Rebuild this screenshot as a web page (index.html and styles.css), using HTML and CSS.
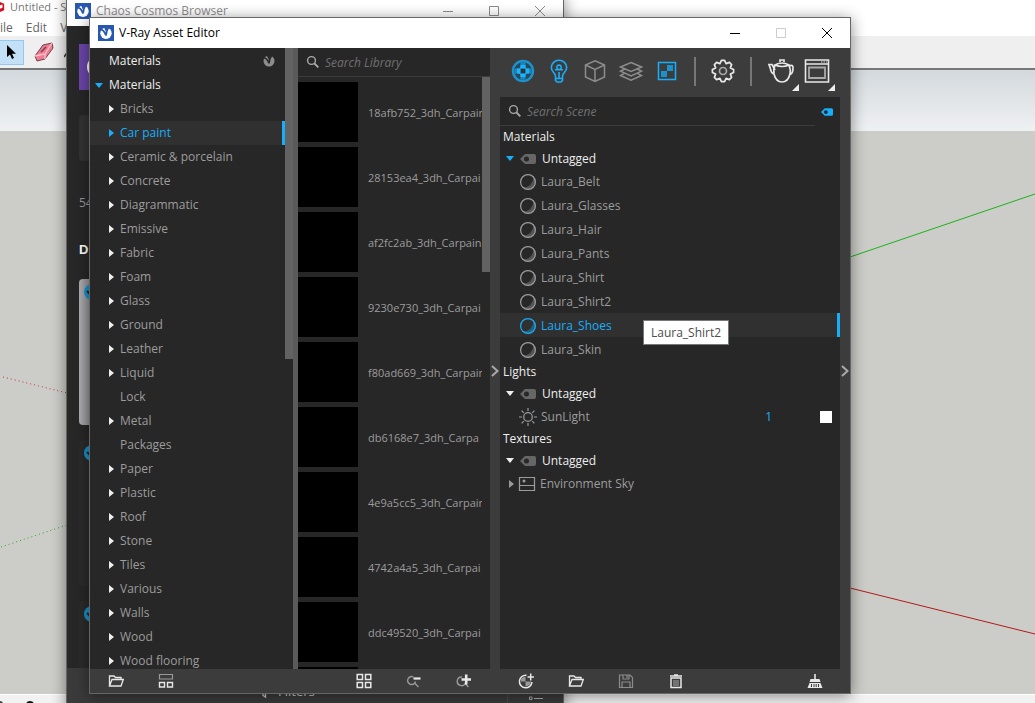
FILE: index.html
```
<!DOCTYPE html>
<html lang="en">
<head>
<meta charset="utf-8">
<title>V-Ray Asset Editor</title>
<link rel="stylesheet" href="styles.css">
</head>
<body>
<svg class="defs" aria-hidden="true">
  <symbol id="vray" viewBox="0 0 16 16"><rect width="16" height="16" fill="#2757ae"/><circle cx="8" cy="8.200" r="5.700" fill="#fff"/><path d="M2 4.800Q5.500 4 8 10.500Q8.500 5 11 1.500" fill="none" stroke="#2757ae" stroke-width="1.800"/><path d="M5.500 1H10L8 7Z" fill="#2757ae"/></symbol>
  <symbol id="search" viewBox="0 0 14 14"><circle cx="5.500" cy="5.500" r="3.900" fill="none" stroke="currentColor" stroke-width="1.400"/><path d="M8.500 8.500 12.300 12.300" stroke="currentColor" stroke-width="1.800"/></symbol>
  <symbol id="tag" viewBox="0 0 16 12"><path fill-rule="evenodd" fill="currentColor" d="M0 6 5 1H14Q16 1 16 3V9Q16 11 14 11H5ZM6.500 3.500A2.500 2.500 0 1 0 6.500 8.500A2.500 2.500 0 1 0 6.500 3.500Z"/></symbol>
  <symbol id="ball" viewBox="0 0 18 18"><path d="M14.500 3.800A7.200 7.200 0 0 1 4 14.500Q14 14 14.500 3.800Z" fill="currentColor" opacity=".4"/><circle cx="9" cy="9" r="7.400" fill="none" stroke="currentColor" stroke-width="1.200"/></symbol>
  <symbol id="folder" viewBox="0 0 16 16"><path d="M1.500 13V3H6L7.500 4.500H13V6.500M1.500 13 4 6.500H15.300L13 13Z" fill="none" stroke="currentColor" stroke-width="1.300"/></symbol>
  <symbol id="check" viewBox="0 0 16 16"><circle cx="8" cy="8" r="8" fill="#1593cf"/><path d="M3 7 7 11 13 5" fill="none" stroke="#222" stroke-width="2"/></symbol>
</svg>

<div class="desktop">
  <section class="app" aria-label="SketchUp">
    <header class="app-title"><svg class="app-logo" viewBox="0 0 6 14"><path d="M0 1 5 3V11L0 13Z" fill="#d9101c"/><path d="M0 5 3 4V8L0 9Z" fill="#fff"/></svg>Untitled - S</header>
    <nav class="app-menu"><button>ile</button><button>Edit</button><button>V</button></nav>
    <div class="app-tools">
      <button class="tool picked" aria-label="Select"><svg width="12" height="16" viewBox="0 0 12 16"><path d="M2 1V13L5 10.500 7 15 9 14 7 9.700H11Z" fill="#000"/></svg></button>
      <button class="tool" aria-label="Eraser"><svg width="20" height="20" viewBox="0 0 20 20"><path d="M1 14 9 3 18 1 19 6 11 17 3 19Z" fill="#ef7d92" stroke="#70404b"/><path d="M1 14 11 12 18 1M11 12V17" fill="none" stroke="#ffc3cb" stroke-width="1.300"/><path d="M7 10 12 5" stroke="#70404b" stroke-width="1.500"/></svg></button>
      <button class="tool" aria-label="Line"><svg width="12" height="16" viewBox="0 0 12 16"><path d="M0 13 4 7 12 0" fill="none" stroke="#333" stroke-width="1.500"/></svg></button>
    </div>
    <div class="viewport">
      <svg class="axes" viewBox="0 0 1035 624" preserveAspectRatio="none">
        <path d="M850 187 1035 124" stroke="#1ab31a"/><path d="M850 518 1035 564" stroke="#b31a1a"/>
        <path d="M3 307 67 323" stroke="#c33232" stroke-dasharray="1 3"/><path d="M1 477 67 455" stroke="#22a822" stroke-dasharray="1 3"/>
      </svg>
    </div>
    <footer class="app-status"><svg width="40" height="9" viewBox="0 0 40 9"><circle cx="0" cy="9" r="3" fill="#444"/><circle cx="30" cy="10" r="4" fill="#111"/></svg></footer>
  </section>

  <section class="window cosmos" aria-label="Chaos Cosmos Browser">
    <header class="titlebar">
      <svg class="win-logo"><use href="#vray"/></svg><h2>Chaos Cosmos Browser</h2>
      <button class="cap" aria-label="Minimize"><svg width="12" height="12" viewBox="0 0 12 12"><path d="M1 6.500H11"/></svg></button>
      <button class="cap" aria-label="Maximize"><svg width="12" height="12" viewBox="0 0 12 12"><path d="M1.500 1.500H10.500V10.500H1.500Z"/></svg></button>
      <button class="cap" aria-label="Close"><svg width="12" height="12" viewBox="0 0 12 12"><path d="M1 1 11 11M11 1 1 11"/></svg></button>
    </header>
    <div class="cosmos-body">
      <div class="brand"><svg width="20" height="24" viewBox="0 0 20 24"><circle cx="12" cy="12" r="10" fill="none" stroke="#fff" stroke-width="2"/></svg></div>
      <div class="filter-box"></div>
      <p class="count">54</p>
      <h3>D</h3>
      <div class="card light"><svg width="16" height="16"><use href="#check"/></svg></div>
      <div class="card"><svg width="16" height="16"><use href="#check"/></svg></div>
      <div class="card"><svg width="16" height="16"><use href="#check"/></svg></div>
    </div>
    <footer class="cosmos-foot">
      <button class="filters"><svg width="12" height="16" viewBox="0 0 12 16"><path d="M1 2H11L7.500 7V14L5 12.500V7Z" fill="none" stroke="#ccc" stroke-width="1.300"/></svg>Filters</button>
      <button class="list-view" aria-label="List view"><svg width="16" height="14" viewBox="0 0 16 14"><path d="M1.500 1.500H4V4H1.500ZM1.500 8H4V10.500H1.500ZM6 3H15M6 9.500H15" fill="none" stroke="#aaa"/></svg></button>
    </footer>
  </section>

  <main class="window editor">
    <header class="titlebar">
      <svg class="win-logo"><use href="#vray"/></svg><h1>V-Ray Asset Editor</h1>
      <button class="cap" aria-label="Minimize"><svg width="12" height="12" viewBox="0 0 12 12"><path d="M1 6.500H11"/></svg></button>
      <button class="cap" aria-label="Maximize" disabled><svg width="12" height="12" viewBox="0 0 12 12"><path d="M1.500 1.500H10.500V10.500H1.500Z"/></svg></button>
      <button class="cap" aria-label="Close"><svg width="12" height="12" viewBox="0 0 12 12"><path d="M1 1 11 11M11 1 1 11"/></svg></button>
    </header>
    <div class="panes">
      <section class="pane" aria-label="Categories">
        <div class="scroller">
          <ul class="tree">
            <li class="root">Materials<svg class="mark" width="12" height="12" viewBox="0 0 12 12"><circle cx="6" cy="6" r="5.500" fill="#8d8d8d"/><path d="M0 2.800Q3.500 2 6 8.300Q6.500 3 9 0" fill="none" stroke="#272727" stroke-width="1.600"/><path d="M3.500 0H8L6 5Z" fill="#272727"/></svg></li>
            <li class="root open"><i class="down blue"></i>Materials</li>
            <li><i class="right"></i>Bricks</li>
            <li class="selected"><i class="right"></i>Car paint</li>
            <li><i class="right"></i>Ceramic &amp; porcelain</li>
            <li><i class="right"></i>Concrete</li>
            <li><i class="right"></i>Diagrammatic</li>
            <li><i class="right"></i>Emissive</li>
            <li><i class="right"></i>Fabric</li>
            <li><i class="right"></i>Foam</li>
            <li><i class="right"></i>Glass</li>
            <li><i class="right"></i>Ground</li>
            <li><i class="right"></i>Leather</li>
            <li><i class="right"></i>Liquid</li>
            <li><i class="right none"></i>Lock</li>
            <li><i class="right"></i>Metal</li>
            <li><i class="right none"></i>Packages</li>
            <li><i class="right"></i>Paper</li>
            <li><i class="right"></i>Plastic</li>
            <li><i class="right"></i>Roof</li>
            <li><i class="right"></i>Stone</li>
            <li><i class="right"></i>Tiles</li>
            <li><i class="right"></i>Various</li>
            <li><i class="right"></i>Walls</li>
            <li><i class="right"></i>Wood</li>
            <li><i class="right"></i>Wood flooring</li>
          </ul>
          <div class="track"><div class="thumb half"></div></div>
        </div>
        <footer class="actions tree-actions">
          <button aria-label="Open folder"><svg><use href="#folder"/></svg></button>
          <button aria-label="Layout"><svg viewBox="0 0 16 16"><path d="M1.500 1.500H14.500V6H1.500Z" fill="none" stroke="#999" stroke-width="1.200"/><path d="M1.500 9.500H6.500V14H1.500ZM9.500 9.500H14.500V14H9.500Z" fill="none" stroke="currentColor" stroke-width="1.400"/></svg></button>
        </footer>
      </section>
      <div class="splitter"></div>
      <section class="pane" aria-label="Library">
        <label class="search"><svg><use href="#search"/></svg><input type="text" placeholder="Search Library" aria-label="Search Library"></label>
        <div class="scroller">
          <ul class="assets">
            <li><span class="preview"></span><span class="name">18afb752_3dh_Carpain</span></li>
            <li><span class="preview"></span><span class="name">28153ea4_3dh_Carpai</span></li>
            <li><span class="preview"></span><span class="name">af2fc2ab_3dh_Carpain</span></li>
            <li><span class="preview"></span><span class="name">9230e730_3dh_Carpai</span></li>
            <li><span class="preview"></span><span class="name">f80ad669_3dh_Carpain</span></li>
            <li><span class="preview"></span><span class="name">db6168e7_3dh_Carpa</span></li>
            <li><span class="preview"></span><span class="name">4e9a5cc5_3dh_Carpain</span></li>
            <li><span class="preview"></span><span class="name">4742a4a5_3dh_Carpai</span></li>
            <li><span class="preview"></span><span class="name">ddc49520_3dh_Carpai</span></li>
            <li><span class="preview"></span></li>
          </ul>
          <div class="track"><div class="thumb third"></div></div>
        </div>
        <footer class="actions library-actions">
          <button aria-label="Grid view"><svg viewBox="0 0 16 16"><path d="M1.200 1.500H6.500V6.500H1.200ZM9.500 1.500H14.800V6.500H9.500ZM1.200 9.500H6.500V14.500H1.200ZM9.500 9.500H14.800V14.500H9.500Z" fill="none" stroke="currentColor" stroke-width="1.500"/></svg></button>
          <button aria-label="Zoom out"><svg viewBox="0 0 16 16"><path d="M7.500 4A4 4 0 1 0 9.500 8.500M9 10.500 12.500 14" fill="none" stroke="#999" stroke-width="1.400"/><path d="M7.500 5.500H14.500" stroke="currentColor" stroke-width="2.200"/></svg></button>
          <button aria-label="Zoom in"><svg viewBox="0 0 16 16"><path d="M6 4A4.300 4.300 0 1 0 9.500 10M9 10.500 12.500 14" fill="none" stroke="#999" stroke-width="1.400"/><path d="M5.500 6.500H15M10.200 1.500V11.500" stroke="currentColor" stroke-width="2.600"/></svg></button>
        </footer>
      </section>
      <section class="scene" aria-label="Scene">
        <button class="gutter" aria-label="Collapse library"><svg width="8" height="14" viewBox="0 0 8 14"><path d="M1 2 6.500 7 1 12"/></svg></button>
        <div class="scene-main">
          <div class="toolbar">
            <button class="on" aria-label="Materials"><svg viewBox="0 0 24 24"><circle cx="12" cy="12" r="8.500" fill="#26485a"/><path d="M9.500 3.500H14.500V7H9.500ZM9.500 17H14.500V20.500H9.500ZM3.500 9.500H7V14.500H3.500ZM17 9.500H20.500V14.500H17Z" fill="#1b87bd"/><path d="M9.500 6H14.500L15 9.500H9ZM9 14.500H15L14.500 18H9.500ZM6 9.500 9.500 9V15L6 14.500ZM14.500 9 18 9.500V14.500L14.500 15Z" fill="#18b4ff"/><path d="M10 10H14V14H10Z" fill="#333"/><circle cx="12" cy="12" r="10" fill="none" stroke="#1b92ce" stroke-width="2.400"/></svg></button>
            <button class="on" aria-label="Lights"><svg viewBox="0 0 24 24"><path d="M8.500 17C8.500 13.800 4.300 12.800 4.300 8.500A7.700 7.300 0 0 1 19.700 8.500C19.700 12.800 15.500 13.800 15.500 17V21.500L14 23H10L8.500 21.500ZM9 19.500H15M12 13V19M8 10.800H16M12 10.500A2.200 2.200 0 1 1 12.100 10.500" fill="none" stroke="currentColor" stroke-width="1.600"/></svg></button>
            <button class="off" aria-label="Geometry"><svg viewBox="0 0 24 24"><path d="M12 1.700 21.500 6V18L12 22.500 2.500 18V6ZM2.500 6 12 10.500 21.500 6M12 10.500V22.500" fill="none" stroke="currentColor" stroke-width="1.500"/></svg></button>
            <button class="off" aria-label="Layers"><svg viewBox="0 0 24 24"><path d="M12 3.500 22.500 8 12 12.500 1.500 8ZM5 10.500 1.500 12.200 12 17 22.500 12.200 19 10.500M5 14.700 1.500 16.500 12 21.300 22.500 16.500 19 14.700" fill="none" stroke="currentColor" stroke-width="1.500"/></svg></button>
            <button class="on" aria-label="Textures"><svg viewBox="0 0 24 24"><path d="M3.500 3.500H20.500V20.500H3.500Z" fill="none" stroke="currentColor" stroke-width="1.500"/><path d="M12 6H18V12H12ZM6 12H12V18H6Z" fill="#1b92ce"/></svg></button>
            <span class="rule"></span>
            <button aria-label="Settings"><svg viewBox="0 0 24 24"><path d="M10.400 1.400 13.600 1.400 15.100 4.600 18.400 3.400 20.600 5.600 19.400 8.900 22.600 10.400 22.600 13.600 19.400 15.100 20.600 18.400 18.400 20.600 15.100 19.400 13.600 22.600 10.400 22.600 8.900 19.400 5.600 20.600 3.400 18.400 4.600 15.100 1.400 13.600 1.400 10.400 4.600 8.900 3.400 5.600 5.600 3.400 8.900 4.600Z" fill="none" stroke="currentColor" stroke-width="1.700" stroke-linejoin="round"/><circle cx="12" cy="12" r="3.500" fill="none" stroke="#aaa" stroke-width="1.700"/></svg></button>
            <span class="rule"></span>
            <div class="render-tools">
              <button aria-label="Render"><svg viewBox="0 0 28 24"><path d="M8 6C6.500 9 6.500 12 7 15Q9 23 15 23T23 15Q24 11 22 6M8 6Q15 9 22 6Q15 2 8 6ZM13 3V1H17V3M7 15Q4 14 3.500 10L2 5.500 5 5.500 8 11M22.500 7Q26.500 5 26 10T22.500 16" fill="none" stroke="currentColor" stroke-width="1.700"/></svg><i class="corner"></i></button>
              <button aria-label="Frame buffer"><svg viewBox="0 0 28 24"><path d="M2.500 1H25.500V23H2.500ZM2.500 5H25.500" fill="none" stroke="currentColor" stroke-width="1.600"/><path d="M18 3H24" stroke="#ccc" stroke-dasharray="1.500 1"/><path d="M6 8.500H22V19H6Z" fill="none" stroke="#aaa" stroke-width="1.800"/></svg><i class="corner"></i></button>
            </div>
          </div>
          <div class="scene-list">
            <div class="search-row">
              <label class="search"><svg><use href="#search"/></svg><input type="text" placeholder="Search Scene" aria-label="Search Scene"></label>
              <button class="tag-filter" aria-label="Filter by tag"><svg><use href="#tag"/></svg></button>
            </div>
            <h2>Materials</h2>
            <div class="group"><i class="down blue"></i><svg class="tag"><use href="#tag"/></svg>Untagged</div>
            <ul>
              <li><svg><use href="#ball"/></svg>Laura_Belt</li>
              <li><svg><use href="#ball"/></svg>Laura_Glasses</li>
              <li><svg><use href="#ball"/></svg>Laura_Hair</li>
              <li><svg><use href="#ball"/></svg>Laura_Pants</li>
              <li><svg><use href="#ball"/></svg>Laura_Shirt</li>
              <li><svg><use href="#ball"/></svg>Laura_Shirt2</li>
              <li class="selected"><svg><use href="#ball"/></svg>Laura_Shoes<span class="tooltip" role="tooltip">Laura_Shirt2</span></li>
              <li><svg><use href="#ball"/></svg>Laura_Skin</li>
            </ul>
            <h2>Lights</h2>
            <div class="group"><i class="down"></i><svg class="tag"><use href="#tag"/></svg>Untagged</div>
            <ul>
              <li><svg viewBox="0 0 18 18"><circle cx="9" cy="9" r="4.300" fill="none" stroke="currentColor" stroke-width="1.200"/><path d="M9 0V3M9 15V18M0 9H3M15 9H18M2.600 2.600 4.800 4.800M13.200 13.200 15.400 15.400M2.600 15.400 4.800 13.200M13.200 4.800 15.400 2.600" stroke="currentColor" stroke-width="1.200"/></svg>SunLight<span class="value">1</span><button class="swatch" aria-label="Light color"></button></li>
            </ul>
            <h2>Textures</h2>
            <div class="group"><i class="down"></i><svg class="tag"><use href="#tag"/></svg>Untagged</div>
            <ul>
              <li class="nested"><i class="right dim"></i><svg viewBox="0 0 18 18"><path d="M1.500 2.500H16.500V15.500H1.500ZM1.500 10.500H16.500" fill="none" stroke="currentColor" stroke-width="1.200"/><circle cx="6" cy="6" r="1.500" fill="currentColor"/></svg>Environment Sky</li>
            </ul>
          </div>
          <footer class="actions scene-actions">
            <button aria-label="Add asset"><svg viewBox="0 0 16 16"><path d="M8.500 2.200A6.300 6.300 0 1 0 14 9" fill="none" stroke="currentColor" stroke-width="1.500"/><path d="M3 8.500V6Q4 4 7.500 3.500V8.500ZM7.500 8.500H13Q12.500 13 7.500 13.500Z" fill="#999"/><path d="M9.500 4H16M12.700 .5V7.500" stroke="currentColor" stroke-width="1.500"/></svg></button>
            <button aria-label="Open"><svg><use href="#folder"/></svg></button>
            <button class="off" aria-label="Save"><svg viewBox="0 0 16 16"><path d="M1.500 2H12L14.500 4.500V14.500H1.500ZM5 2V6H11V2M9 2V5M4 14V9H12V14" fill="none" stroke="currentColor" stroke-width="1.200"/></svg></button>
            <button aria-label="Delete"><svg viewBox="0 0 16 16"><path d="M2 3H14M6 2H10M3 5V14.500H13V5Z" fill="none" stroke="currentColor" stroke-width="1.500"/><path d="M6 7V13M8 7V13M10 7V13" stroke="#aaa"/></svg></button>
            <button class="purge" aria-label="Purge unused"><svg viewBox="0 0 16 16"><path d="M7.200 1H8.800V6H12.500L13.500 9H2.500L3.500 6H7.200Z" fill="currentColor"/><path d="M2.500 10H13.500L15.500 15H.5ZM4 13H12" fill="currentColor"/><path d="M4.500 11V14M7 11V14M9.200 11V14M11.500 11V14" stroke="#3c3c3c"/></svg></button>
          </footer>
        </div>
        <button class="gutter" aria-label="Expand properties"><svg width="8" height="14" viewBox="0 0 8 14"><path d="M1 2 6.500 7 1 12"/></svg></button>
      </section>
    </div>
  </main>
</div>
</body>
</html>
```

FILE: styles.css
```
* { box-sizing: border-box; }
body { margin: 0; font-family: "Open Sans", "Noto Sans", sans-serif; font-size: 12px; line-height: 16px; }
button { border: 0; padding: 0; margin: 0; background: none; color: inherit; font: inherit; }
ul { list-style: none; margin: 0; padding: 0; }
h1, h2, h3, p { margin: 0; font-size: 12px; font-weight: 400; }
.defs { position: absolute; width: 0; height: 0; }
.desktop { position: relative; height: 100vh; overflow: hidden; }

.app { display: flex; flex-direction: column; height: 100%; background: #fff; color: #777; }
.app-title { display: flex; align-items: center; gap: 5px; height: 14px; font-size: 11px; }
.app-logo { width: 5px; height: 14px; }
.app-menu { display: flex; gap: 13px; height: 22px; padding-top: 6px; color: #666; font-size: 12px; }
.app-tools { display: flex; align-items: center; gap: 10px; height: 34px; background: #efefef; border-bottom: 2px solid #777; }
.tool { display: flex; align-items: center; height: 25px; }
.tool.picked { padding: 0 6px 0 5px; background: #c4e0f7; border: 1px solid #90c8f6; border-left: 0; }
.viewport { flex: 1; min-height: 0; background: linear-gradient(#d3d9dd, #eff1f3 61px, #cccdc8 61px); }
.axes { display: block; width: 100%; height: 100%; }
.app-status { height: 9px; background: #f2f2f2; border-top: 1px solid #fff; }
.app-status svg { display: block; }

.window { position: absolute; display: flex; flex-direction: column; border: 1px solid #666; box-shadow: 0 2px 14px rgba(0, 0, 0, .45); }
.titlebar { display: flex; align-items: center; flex: none; background: #fff; color: #000; }
.titlebar h1, .titlebar h2 { flex: 1; margin-left: 5px; }
.win-logo { width: 16px; height: 16px; margin-left: 8px; }
.cap { display: grid; place-items: center; width: 46px; height: 100%; }
.cap path { fill: none; stroke: currentColor; }
.cap:disabled { color: #ccc; }

.cosmos { top: -6px; bottom: -30px; left: 66px; right: 471px; background: #272727; }
.cosmos .titlebar { height: 31px; color: #8c8c8c; }
.cosmos-body { flex: 1; display: flex; flex-direction: column; padding: 18px 12px 0; color: #999; overflow: hidden; }
.brand { height: 46px; flex: none; padding: 11px 7px; background: #6b45a8; }
.filter-box { height: 46px; flex: none; margin-top: 25px; background: #333; border-radius: 4px; }
.count { margin: 34px 0 31px; }
.cosmos-body h3 { font-weight: 700; color: #fff; font-family: "Liberation Sans", sans-serif; font-size: 13px; }
.card { flex: none; height: 146px; margin-bottom: 15px; padding: 5px; border-radius: 4px; background: #2b2b2b; }
.card.light { margin-top: 21px; background: linear-gradient(90deg, #aeaeb2, #909094 12px); }
.cosmos-foot { display: flex; justify-content: space-between; height: 64px; flex: none; padding: 15px 19px 0 191px; background: #3a3a3a; color: #ccc; }
.filters { display: flex; align-items: center; gap: 8px; height: 16px; font-size: 13px; }
.list-view { display: flex; align-items: flex-start; height: 50px; padding: 6px 0 0 20px; border-left: 1px solid #4a4a4a; }

.editor { top: 17px; right: 184px; bottom: 9px; left: 89px; background: #272727; }
.editor .titlebar { height: 30px; }
.panes { flex: 1; min-height: 0; display: grid; grid-template-columns: 203px 5px 192px 1fr; color: #9c9c9c; background: #3c3c3c; }
.pane { display: flex; flex-direction: column; min-width: 0; min-height: 0; background: #272727; }
.splitter { margin-bottom: 24px; background: #5a5a5a; }
.scroller { flex: 1; min-height: 0; display: grid; grid-template-columns: 1fr 8px; overflow: hidden; }
.track { min-height: 0; }
.thumb { background: #626262; }
.thumb.half { height: 50%; }
.thumb.third { height: 33%; }

.down, .right { display: block; flex: none; border: 0 solid transparent; }
.down { border-width: 5px 4px 0; border-top-color: #eee; }
.down.blue { border-top-color: #18aefa; }
.right { border-width: 4px 0 4px 5px; border-left-color: #eee; }
.right.dim { border-left-color: #999; }
.right.none { visibility: hidden; }

.tree { padding-top: 1px; min-height: 0; }
.tree li { display: flex; align-items: center; gap: 6px; height: 24px; padding-left: 19px; }
.tree .root { color: #eee; justify-content: space-between; padding-right: 10px; }
.tree .open { justify-content: flex-start; padding-left: 5px; }
.tree .selected { color: #18aefa; background: #303030; border-right: 3px solid #18aefa; }
.tree .selected .right { border-left-color: #18aefa; }

.search { display: flex; align-items: center; flex: none; gap: 5px; height: 29px; padding-left: 8px; border-bottom: 1px solid #3c3c3c; color: #aaa; }
.search svg { width: 14px; height: 14px; flex: none; }
.search input { flex: 1; min-width: 0; padding: 2px 0 0; border: 0; outline: 0; background: none; color: #ccc; font: inherit; font-style: italic; }
.search input::placeholder { color: #707070; opacity: 1; }
.assets { display: flex; flex-direction: column; gap: 5px; padding-top: 5px; min-width: 0; min-height: 0; }
.assets li { display: flex; align-items: center; gap: 10px; height: 60px; flex: none; }
.preview { width: 60px; height: 60px; flex: none; background: #000; }
.name { overflow: hidden; padding-top: 2px; white-space: nowrap; font-size: 11px; }

.actions { display: flex; align-items: center; flex: none; gap: 34px; height: 24px; background: #3c3c3c; color: #e8e8e8; }
.actions svg { display: block; width: 16px; height: 16px; }
.tree-actions { padding-left: 18px; }
.library-actions { padding-left: 58px; }
.scene-actions { padding: 0 17px 0 18px; }
.purge { margin-left: auto; }
.off { color: #8c8c8c; }
.on { color: #18aefa; }

.scene { display: grid; grid-template-columns: 10px 1fr 10px; min-width: 0; min-height: 0; }
.gutter { display: grid; place-items: center; }
.gutter path { fill: none; stroke: #aaa; stroke-width: 2; }
.scene-main { display: flex; flex-direction: column; min-width: 0; min-height: 0; }
.toolbar { display: flex; align-items: center; flex: none; gap: 12px; height: 49px; padding: 0 0 3px 11px; color: #e8e8e8; }
.toolbar .off { color: #8c8c8c; }
.toolbar .on { color: #18aefa; }
.toolbar svg { display: block; width: 24px; height: 24px; }
.rule { width: 2px; height: 29px; margin: 0 3px; background: #777; }
.render-tools { display: flex; gap: 8px; }
.render-tools button { position: relative; }
.render-tools svg { width: 28px; }
.corner { position: absolute; right: -4px; bottom: -8px; border: 0 solid transparent; border-width: 0 0 7px 7px; border-bottom-color: #eee; }
.scene-list { flex: 1; min-height: 0; background: #272727; }
.search-row { display: flex; justify-content: space-between; align-items: center; height: 29px; padding-right: 7px; }
.search-row .search { flex: 1; height: 28px; margin-right: 6px; }
.tag-filter { width: 12px; height: 10px; color: #18aefa; }
.tag-filter svg { display: block; width: 12px; height: 10px; }
.scene-list h2 { height: 20px; padding: 3px 3px 0; color: #eee; }
.group { display: flex; align-items: center; gap: 5px; height: 23px; padding: 2px 0 0 6px; color: #eee; }
.tag { width: 16px; height: 12px; margin: 0 1px; color: #666; }
.scene-list li { position: relative; display: flex; align-items: center; gap: 4px; height: 24px; padding: 1px 8px 0 19px; }
.scene-list li svg { width: 18px; height: 18px; }
.scene-list li.nested { padding-left: 9px; }
.scene-list .selected { color: #18aefa; background: #303030; border-right: 3px solid #18aefa; }
.tooltip { position: absolute; left: 143px; top: 7px; padding: 3px 7px; border: 1px solid #777; background: #fff; color: #4c4c4c; line-height: 17px; z-index: 1; }
.value { margin-left: auto; margin-right: 44px; color: #18aefa; }
.swatch { width: 12px; height: 12px; background: #fff; }
```
